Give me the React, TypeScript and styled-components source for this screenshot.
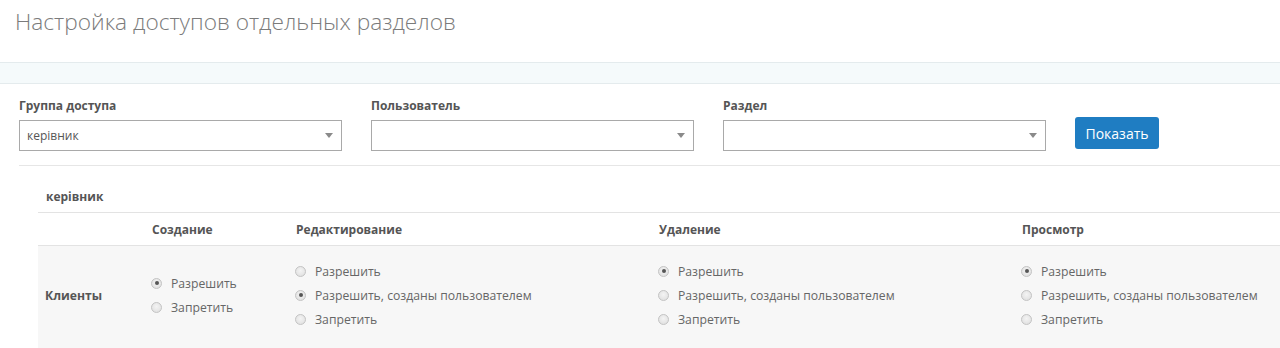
import styled, { createGlobalStyle } from 'styled-components';

const GlobalStyle = createGlobalStyle`
    html, body {
        margin: 0;
        padding: 0;
        background: #ffffff;
        overflow: hidden;
        font-family: "Open Sans", "Liberation Sans", sans-serif;
    }
`

const Page = styled.div`
    width: 1280px;
    height: 348px;
    overflow: hidden;
`

const Title = styled.h1`
    margin: 0;
    padding: 7px 15px 0;
    height: 54px;
    box-sizing: border-box;
    font-size: 22.7px;
    font-weight: 300;
    color: #7b7b7b;
    line-height: 30px;
`

const Band = styled.div`
    height: 20px;
    background: #f5fafb;
    border-top: 1px solid #e4ebed;
    border-bottom: 1px solid #e4ebed;
    margin-top: 8px;
`

const FilterRow = styled.div`
    display: grid;
    grid-template-columns: repeat(3, 352px) auto;
    margin: 0 0 0 19px;
    padding: 13px 0 14px;
    border-bottom: 1px solid #e6e6e6;
    align-items: end;
`

const Field = styled.div`
    display: flex;
    flex-direction: column;
`

const Label = styled.label`
    font-size: 12px;
    font-weight: 700;
    color: #555;
    line-height: 17px;
    margin-bottom: 6px;
`

const Select = styled.div`
    position: relative;
    width: 323px;
    height: 31px;
    box-sizing: border-box;
    border: 1px solid #a9a9a9;
    background: #fff;
    font-size: 12px;
    color: #555;
    line-height: 29px;
    padding-left: 7px;

    &::after {
        content: "";
        position: absolute;
        right: 8px;
        top: 12px;
        border-left: 4px solid transparent;
        border-right: 4px solid transparent;
        border-top: 5px solid #8a8a8a;
    }
`

const Button = styled.button`
    width: 84px;
    height: 32px;
    margin-bottom: 2px;
    border: none;
    border-radius: 3px;
    background: #1f7dc2;
    color: #fff;
    font-family: inherit;
    font-size: 14px;
    cursor: pointer;
`

const Section = styled.div`
    margin: 22px 0 0 38px;
`

const GroupName = styled.div`
    font-size: 12px;
    font-weight: 700;
    color: #555;
    padding: 0 8px;
    line-height: 17px;
    padding-bottom: 7px;
    border-bottom: 1px solid #e3e3e3;
`

const Table = styled.table`
    border-collapse: collapse;
    width: 1339px;
    table-layout: fixed;
    font-size: 12.2px;
    color: #555;
`

const HeadCell = styled.th<{ $w: number }>`
    box-sizing: border-box;
    width: ${p => p.$w}px;
    text-align: left;
    font-weight: 700;
    font-size: 12px;
    padding: 8px 8px 7px;
    line-height: 17px;
    border-bottom: 1px solid #e3e3e3;
`

const Cell = styled.td<{ $bold?: boolean }>`
    background: #f7f7f7;
    padding: 13px 7px 20px;
    font-weight: ${p => (p.$bold ? 700 : 400)};
    vertical-align: middle;
`

const Options = styled.div`
    display: flex;
    flex-direction: column;
`

const Option = styled.label`
    display: flex;
    align-items: center;
    gap: 9px;
    height: 24px;
    color: #666;
    white-space: nowrap;
`

const Radio = styled.span<{ $on?: boolean }>`
    width: 9px;
    height: 9px;
    border-radius: 50%;
    border: 1px solid #c4c4c4;
    background: radial-gradient(circle at 50% 40%, #f4f4f4, #dcdcdc);
    position: relative;
    flex-shrink: 0;

    &::after {
        content: "";
        display: ${p => (p.$on ? 'block' : 'none')};
        position: absolute;
        left: 2.5px;
        top: 2.5px;
        width: 4px;
        height: 4px;
        border-radius: 50%;
        background: #555;
    }
`

type Choice = { text: string; on?: boolean }

const RadioGroup = ({ items }: { items: Choice[] }) => (
    <Options>
        {items.map(i => (
            <Option key={i.text}>
                <Radio $on={i.on} />
                {i.text}
            </Option>
        ))}
    </Options>
)

const allow = 'Разрешить'
const own = 'Разрешить, созданы пользователем'
const deny = 'Запретить'

export default function App() {
    return (
        <Page>
            <GlobalStyle />
            <Title>Настройка доступов отдельных разделов</Title>
            <Band />
            <FilterRow>
                <Field>
                    <Label>Группа доступа</Label>
                    <Select>керівник</Select>
                </Field>
                <Field>
                    <Label>Пользователь</Label>
                    <Select />
                </Field>
                <Field>
                    <Label>Раздел</Label>
                    <Select />
                </Field>
                <Button>Показать</Button>
            </FilterRow>
            <Section>
                <GroupName>керівник</GroupName>
                <Table>
                    <thead>
                        <tr>
                            <HeadCell $w={106}></HeadCell>
                            <HeadCell $w={144}>Создание</HeadCell>
                            <HeadCell $w={363}>Редактирование</HeadCell>
                            <HeadCell $w={363}>Удаление</HeadCell>
                            <HeadCell $w={363}>Просмотр</HeadCell>
                        </tr>
                    </thead>
                    <tbody>
                        <tr>
                            <Cell $bold>Клиенты</Cell>
                            <Cell>
                                <RadioGroup items={[{ text: allow, on: true }, { text: deny }]} />
                            </Cell>
                            <Cell>
                                <RadioGroup items={[{ text: allow }, { text: own, on: true }, { text: deny }]} />
                            </Cell>
                            <Cell>
                                <RadioGroup items={[{ text: allow, on: true }, { text: own }, { text: deny }]} />
                            </Cell>
                            <Cell>
                                <RadioGroup items={[{ text: allow, on: true }, { text: own }, { text: deny }]} />
                            </Cell>
                        </tr>
                    </tbody>
                </Table>
            </Section>
        </Page>
    )
}
